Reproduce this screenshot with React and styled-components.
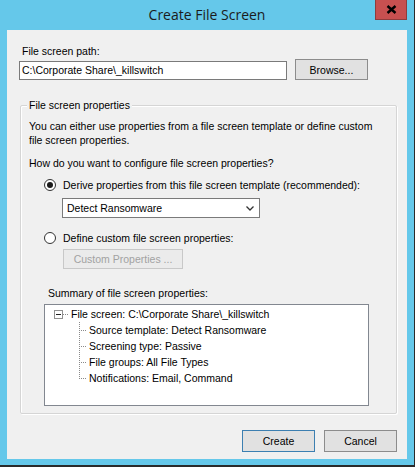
import React from 'react';
import styled, { createGlobalStyle } from 'styled-components';

const GlobalStyle = createGlobalStyle`
  html, body {
    margin: 0;
    padding: 0;
    background: #65c8ea;
  }
  * {
    box-sizing: border-box;
  }
`;

const Window = styled.div`
  width: 415px;
  height: 467px;
  background: #65c8ea;
  border-right: 1px solid #2a2a2a;
  border-bottom: 2px solid #2a2a2a;
  display: flex;
  flex-direction: column;
  font-family: "Liberation Sans", Arial, sans-serif;
  font-size: 10.5px;
  color: #000;
`;

const TitleBar = styled.div`
  height: 30px;
  display: grid;
  grid-template-columns: 1fr auto 1fr;
  align-items: start;
`;

const Title = styled.div`
  grid-column: 2;
  font-family: "Open Sans", "Noto Sans", sans-serif;
  font-size: 14px;
  line-height: 30px;
  color: #1b1b1b;
`;

const CloseButton = styled.div`
  grid-column: 3;
  justify-self: end;
  width: 32px;
  height: 21px;
  margin-right: 7px;
  margin-top: -1px;
  background: #c75050;
  border: 1px solid #8e3d3d;
  border-top: none;
  display: flex;
  align-items: center;
  justify-content: center;
`;

const Client = styled.div`
  margin: 0 7px;
  width: 400px;
  height: 429px;
  background: #f0f0f0;
  padding: 15px 10px 0 13px;
  display: flex;
  flex-direction: column;
`;

const Label = styled.div`
  line-height: 13px;
  margin-left: ${(p) => p.$indent || 0}px;
  margin-top: ${(p) => p.$top || 0}px;
  color: ${(p) => (p.$disabled ? '#a0a0a0' : '#000')};
`;

const PathRow = styled.div`
  display: flex;
  align-items: flex-end;
  gap: 8px;
  margin-top: 1px;
  margin-left: -1px;
`;

const TextBox = styled.div`
  width: 268px;
  height: 19px;
  background: #fff;
  border: 1px solid #7a7a7a;
  padding: 0 2px;
  line-height: 17px;
  white-space: nowrap;
`;

const Button = styled.div`
  width: ${(p) => p.$width || 73}px;
  height: ${(p) => p.$height || 21}px;
  margin-left: ${(p) => p.$left || 0}px;
  margin-top: ${(p) => p.$top || 0}px;
  background: ${(p) => (p.$disabled ? '#ebebeb' : '#e1e1e1')};
  border: 1px solid
    ${(p) => (p.$primary ? '#3c7fb1' : p.$disabled ? '#c8c8c8' : '#8c8c8c')};
  color: ${(p) => (p.$disabled ? '#a2a2a2' : '#000')};
  display: flex;
  align-items: center;
  justify-content: center;
  white-space: nowrap;
`;

const GroupBox = styled.div`
  position: relative;
  margin-top: 25px;
  height: 309px;
  border: 1px solid #d5d5d5;
  box-shadow: inset 1px 1px 0 #fff, 1px 1px 0 #fff;
  border-radius: 2px;
  padding: 13px 0 0 0;
  display: flex;
  flex-direction: column;
`;

const GroupTitle = styled.div`
  position: absolute;
  top: -7px;
  left: 6px;
  padding: 0 2px;
  line-height: 13px;
  background: #f0f0f0;
`;

const Description = styled.div`
  margin-left: 8px;
  line-height: 14px;
  width: 350px;
`;

const RadioRow = styled.div`
  display: flex;
  align-items: center;
  gap: 7px;
  margin-left: 23px;
  margin-top: ${(p) => p.$top || 0}px;
  height: 14px;
`;

const RadioCircle = styled.span`
  width: 12px;
  height: 12px;
  border-radius: 50%;
  border: 1px solid #333;
  background: #fff;
  display: flex;
  align-items: center;
  justify-content: center;

  &::after {
    content: '';
    width: 6px;
    height: 6px;
    border-radius: 50%;
    background: ${(p) => (p.$checked ? '#1a1a1a' : 'transparent')};
  }
`;

const Select = styled.div`
  width: 198px;
  height: 20px;
  margin-left: 41px;
  margin-top: 6px;
  background: #fff;
  border: 1px solid #7a7a7a;
  display: flex;
  align-items: center;
  justify-content: space-between;
  padding: 0 5px 0 4px;
`;

const Tree = styled.div`
  margin-left: 23px;
  margin-top: 4px;
  width: 325px;
  height: 102px;
  background: #fff;
  border: 1px solid #828790;
  padding-top: 1px;
`;

const TreeRow = styled.div`
  height: 16px;
  display: flex;
  align-items: stretch;
  padding-left: ${(p) => p.$indent}px;
  white-space: nowrap;
`;

const Expander = styled.span`
  align-self: center;
  width: 9px;
  height: 9px;
  border: 1px solid #919191;
  background: #fff;
  display: flex;
  align-items: center;
  justify-content: center;

  &::after {
    content: '';
    width: 5px;
    height: 1px;
    background: #222;
  }
`;

const dots = (dir) =>
  `repeating-linear-gradient(${dir}, #8a8a8a 0 1px, transparent 1px 2px)`;

const Connector = styled.span`
  width: ${(p) => p.$width}px;
  margin-right: 2px;
  background-image: ${(p) =>
    p.$vertical ? `${dots('to bottom')}, ${dots('to right')}` : dots('to right')};
  background-repeat: no-repeat;
  background-size: ${(p) =>
    p.$vertical ? `1px ${p.$last ? '50%' : '100%'}, 100% 1px` : '100% 1px'};
  background-position: ${(p) =>
    p.$vertical ? 'left top, left 8px' : 'left 8px'};
`;

const TreeText = styled.span`
  line-height: 16px;
`;

const Footer = styled.div`
  display: flex;
  justify-content: flex-end;
  gap: 9px;
  margin-top: 16px;
`;

const CloseIcon = () => (
  <svg width="11" height="9" viewBox="0 0 11 9">
    <path d="M1.5 1 L9.5 8 M9.5 1 L1.5 8" stroke="#000" strokeWidth="2.4" />
  </svg>
);

const Chevron = () => (
  <svg width="8" height="5" viewBox="0 0 8 5">
    <path d="M0.5 0.5 L4 4 L7.5 0.5" stroke="#333" strokeWidth="1.3" fill="none" />
  </svg>
);

const children = [
  'Source template: Detect Ransomware',
  'Screening type: Passive',
  'File groups: All File Types',
  'Notifications: Email, Command',
];

export default function App() {
  return (
    <>
      <GlobalStyle />
      <Window>
        <TitleBar>
          <Title>Create File Screen</Title>
          <CloseButton>
            <CloseIcon />
          </CloseButton>
        </TitleBar>
        <Client>
          <Label $indent={2}>File screen path:</Label>
          <PathRow>
            <TextBox>C:\Corporate Share\_killswitch</TextBox>
            <Button>Browse...</Button>
          </PathRow>

          <GroupBox>
            <GroupTitle>File screen properties</GroupTitle>
            <Description>
              You can either use properties from a file screen template or define custom
              file screen properties.
            </Description>
            <Label $indent={8} $top={10}>
              How do you want to configure file screen properties?
            </Label>
            <RadioRow $top={8}>
              <RadioCircle $checked />
              <span>Derive properties from this file screen template (recommended):</span>
            </RadioRow>
            <Select>
              <span>Detect Ransomware</span>
              <Chevron />
            </Select>
            <RadioRow $top={13}>
              <RadioCircle />
              <span>Define custom file screen properties:</span>
            </RadioRow>
            <Button $disabled $width={120} $height={20} $left={42} $top={4}>
              Custom Properties ...
            </Button>
            <Label $indent={27} $top={18}>
              Summary of file screen properties:
            </Label>
            <Tree>
              <TreeRow $indent={9}>
                <Expander />
                <Connector $width={6} />
                <TreeText>File screen: C:\Corporate Share\_killswitch</TreeText>
              </TreeRow>
              {children.map((c, i) => (
                <TreeRow key={c} $indent={34}>
                  <Connector $vertical $last={i === children.length - 1} $width={8} />
                  <TreeText>{c}</TreeText>
                </TreeRow>
              ))}
            </Tree>
          </GroupBox>

          <Footer>
            <Button $primary $height={22}>Create</Button>
            <Button $height={22}>Cancel</Button>
          </Footer>
        </Client>
      </Window>
    </>
  );
}
